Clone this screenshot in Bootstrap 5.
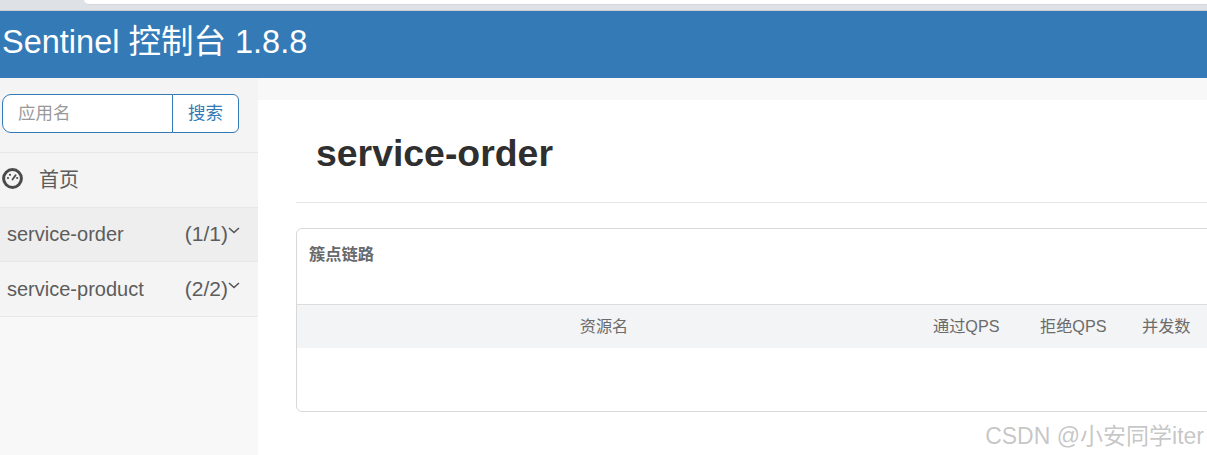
<!DOCTYPE html>
<html lang="zh-CN">
<head>
  <meta charset="UTF-8">
  <meta name="viewport" content="width=device-width, initial-scale=1.0">
  <title>Sentinel 控制台</title>
  <link href="https://cdn.jsdelivr.net/npm/bootstrap@5.3.0/dist/css/bootstrap.min.css" rel="stylesheet">
  <style>
    html, body { height: 455px; overflow: hidden; }
    body { font-family: "Liberation Sans", "Noto Sans CJK SC", sans-serif; background: #f8f8f8; color: #676a6c; }
    .browser-strip { height: 11px; background: #dee1e6; border-bottom: 1px solid #c9ccd1; }
    .browser-tab { margin-left: 84px; height: 5px; background: #fff; border-bottom: 1px solid #d4d6da; border-radius: 0 0 0 8px; }
    .top-brand { height: 67px; background: #337ab7; color: #fff; font-size: 32.5px; line-height: 63px; padding-left: 2px; white-space: nowrap; }
    .page-body { height: 377px; overflow: hidden; }
    .side-col { width: 258px; flex: none; }
    .side-menu { background: #f4f4f4; }
    .side-search { padding: 16px 19px 0 2px; height: 74px; }
    .side-search input, .side-search button { height: 39px; font-size: 17.5px; border-color: #337ab7; }
    .side-search input { width: 171px; flex: none; flex-grow: 0; padding: 0 15px; border-radius: 9px 0 0 9px; color: #555; }
    .side-search input::placeholder { color: #999; }
    .side-search button { flex: 1; padding: 0; color: #337ab7; background: #fff; border-radius: 0 6px 6px 0; margin-left: -1px; }
    .side-item { border-top: 1px solid #e7e7e7; font-size: 20px; color: #5c5c5c; background: transparent; white-space: nowrap; }
    .side-home { height: 55px; padding-left: 2px; gap: 16px; }
    .side-home svg { margin-top: -3px; }
    .side-app { height: 54px; padding-left: 7px; padding-right: 18px; }
    .side-app.is-open { background: #eee; padding-bottom: 1px; }
    .side-app.is-last { border-bottom: 1px solid #e7e7e7; height: 56px; }
    .app-count { margin-left: auto; font-size: 21px; }
    .app-caret { margin-top: -8px; }
    .main-col { flex: 1; min-width: 0; padding-top: 22px; }
    .main-panel { background: #fff; height: 355px; padding-left: 38px; }
    .app-title { height: 103px; margin: 0; padding: 0 0 0 20px; line-height: 106px; font-size: 37.4px; font-weight: 700; color: #2f2f2f; border-bottom: 1px solid #e7e7e7; font-family: "Liberation Sans", sans-serif; }
    .chain-box { margin-top: 25px; height: 184px; width: 960px; border: 1px solid #d8d8d8; border-radius: 6px 0 0 6px; }
    .chain-head { height: 76px; padding: 15px 12px; font-size: 16.3px; font-weight: 700; line-height: 20px; color: #676a6c; border-bottom: 1px solid #dcdcdc; }
    .chain-cols { height: 43px; background: #f3f4f6; font-size: 16.2px; color: #6b6b6b; line-height: 42px; white-space: nowrap; }
    .col-res { width: 614px; text-align: center; }
    .col-pass { width: 102px; padding-left: 22px; }
    .col-block { width: 107px; padding-left: 27px; }
    .col-conc { padding-left: 22px; }
    .csdn-mark { position: absolute; right: 3px; bottom: 4px; font-size: 23px; line-height: 30px; color: rgba(150,150,150,.55); white-space: nowrap; }
  </style>
</head>
<body>
  <div class="browser-strip"><div class="browser-tab"></div></div>
  <div class="top-brand">Sentinel 控制台 1.8.8</div>
  <div class="page-body d-flex">
    <div class="side-col">
      <div class="side-menu">
        <form class="side-search d-flex">
          <input type="text" class="form-control" placeholder="应用名">
          <button type="button" class="btn">搜索</button>
        </form>
        <div class="side-item side-home d-flex align-items-center">
          <svg width="21" height="21" viewBox="0 0 21 21" fill="none" aria-hidden="true">
            <circle cx="10.5" cy="10.5" r="8.9" stroke="#4a4a4a" stroke-width="3"/>
            <path d="M10.5 11.5 13.6 7.2" stroke="#4a4a4a" stroke-width="1.8" stroke-linecap="round"/>
            <circle cx="6" cy="10" r="1.1" fill="#4a4a4a"/>
            <circle cx="8" cy="6.8" r="1.1" fill="#4a4a4a"/>
            <circle cx="15.2" cy="10" r="1.1" fill="#4a4a4a"/>
          </svg>
          <span>首页</span>
        </div>
        <div class="side-item side-app is-open d-flex align-items-center">
          <span>service-order</span><span class="app-count">(1/1)</span>
          <svg class="app-caret" width="12" height="7" viewBox="0 0 12 7" fill="none" aria-hidden="true"><path d="M1 1 6 5.5 11 1" stroke="#555" stroke-width="1.6"/></svg>
        </div>
        <div class="side-item side-app is-last d-flex align-items-center">
          <span>service-product</span><span class="app-count">(2/2)</span>
          <svg class="app-caret" width="12" height="7" viewBox="0 0 12 7" fill="none" aria-hidden="true"><path d="M1 1 6 5.5 11 1" stroke="#555" stroke-width="1.6"/></svg>
        </div>
      </div>
    </div>
    <div class="main-col">
      <div class="main-panel">
        <h1 class="app-title">service-order</h1>
        <div class="chain-box">
          <div class="chain-head">簇点链路</div>
          <div class="chain-cols d-flex">
            <div class="col-res">资源名</div>
            <div class="col-pass">通过QPS</div>
            <div class="col-block">拒绝QPS</div>
            <div class="col-conc">并发数</div>
          </div>
        </div>
      </div>
    </div>
  </div>
  <div class="csdn-mark">CSDN @小安同学iter</div>
</body>
</html>
